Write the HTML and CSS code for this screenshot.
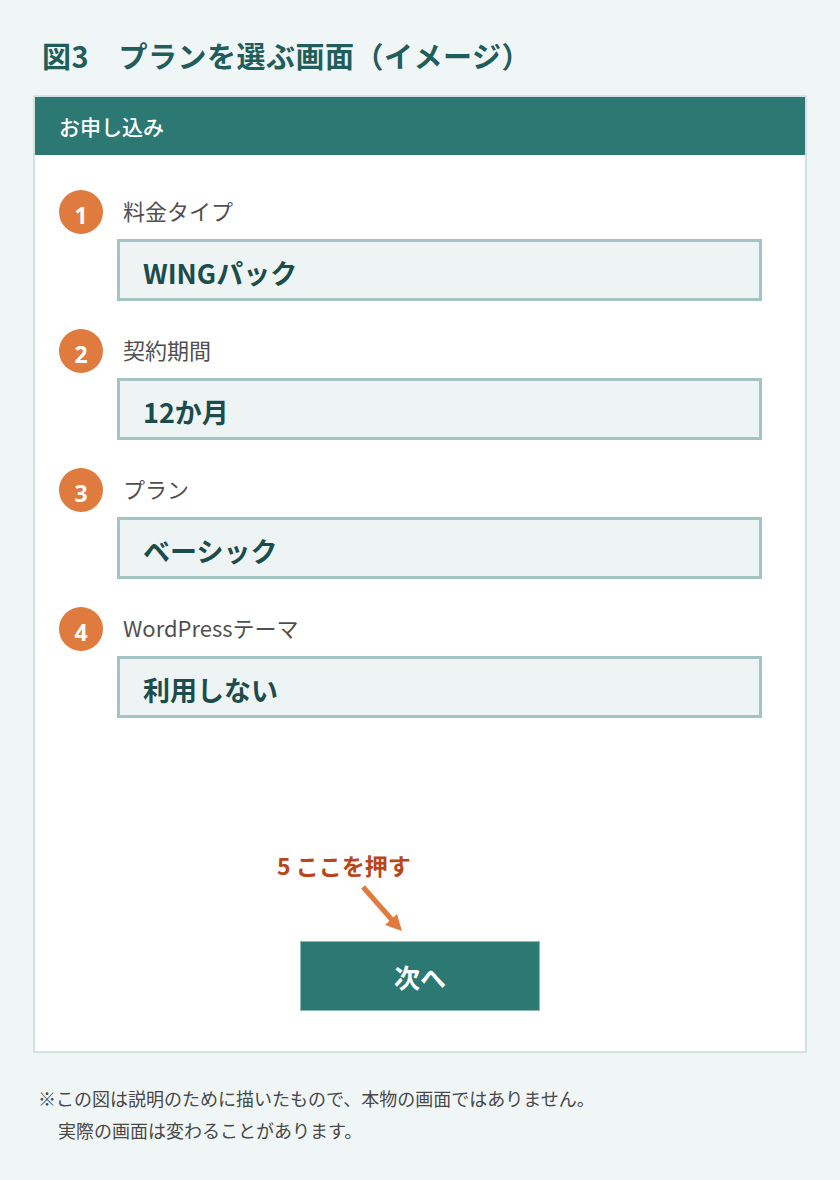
FILE: index.html
```html
<!DOCTYPE html>
<html lang="ja">
<head>
<meta charset="utf-8">
<title>図3 プランを選ぶ画面</title>
<link rel="stylesheet" href="styles.css">
</head>
<body>
<main class="page">
  <h1 class="fig-title">図3　プランを選ぶ画面（イメージ）</h1>

  <section class="card">
    <header class="card-head">お申し込み</header>
    <div class="card-body">
      <div class="fields">
        <div class="field">
          <div class="field-label"><span class="step">1</span><span class="label-text">料金タイプ</span></div>
          <div class="field-box">WINGパック</div>
        </div>
        <div class="field">
          <div class="field-label"><span class="step">2</span><span class="label-text">契約期間</span></div>
          <div class="field-box">12か月</div>
        </div>
        <div class="field">
          <div class="field-label"><span class="step">3</span><span class="label-text">プラン</span></div>
          <div class="field-box">ベーシック</div>
        </div>
        <div class="field">
          <div class="field-label"><span class="step">4</span><span class="label-text">WordPressテーマ</span></div>
          <div class="field-box">利用しない</div>
        </div>
      </div>

      <div class="callout">
        <p class="callout-text">5 ここを押す</p>
        <svg class="callout-arrow" width="48" height="52" viewBox="0 0 48 52">
          <line x1="4" y1="4" x2="34" y2="38" stroke="#e07b3f" stroke-width="5" stroke-linecap="butt"/>
          <polygon points="43,48 26,42 38,31" fill="#e07b3f"/>
        </svg>
      </div>

      <div class="actions">
        <button class="next-btn" type="button">次へ</button>
      </div>
    </div>
  </section>

  <div class="note">
    <p class="note-line">※この図は説明のために描いたもので、本物の画面ではありません。</p>
    <p class="note-line indent">実際の画面は変わることがあります。</p>
  </div>
</main>
</body>
</html>
```

FILE: styles.css
```css
* {
  box-sizing: border-box;
}

html, body {
  margin: 0;
  padding: 0;
}

body {
  background: #f0f6f6;
  font-family: "Noto Sans CJK JP", "Open Sans", sans-serif;
  color: #444;
  width: 840px;
  height: 1180px;
  overflow: hidden;
}

.page {
  padding: 33px 33px 0 33px;
}

.fig-title {
  margin: 0 0 18px 9px;
  font-size: 29px;
  line-height: 44px;
  font-weight: 700;
  color: #1f5e5b;
  letter-spacing: 0.5px;
}

.card {
  width: 774px;
  background: #fff;
  border: 2px solid #d2e2e2;
}

.card-head {
  height: 58px;
  background: #2c7873;
  color: #fff;
  font-size: 21px;
  font-weight: 500;
  line-height: 58px;
  padding-left: 24px;
}

.card-body {
  padding: 35px 43px 40px 24px;
}

.fields {
  display: flex;
  flex-direction: column;
  gap: 28px;
}

.field {
  display: flex;
  flex-direction: column;
  gap: 5px;
}

.field-label {
  display: flex;
  align-items: center;
  height: 44px;
}

.step {
  width: 44px;
  height: 44px;
  border-radius: 50%;
  background: #e07b3f;
  color: #fff;
  font-family: "Open Sans", "Noto Sans", sans-serif;
  font-weight: 700;
  font-size: 23px;
  line-height: 44px;
  text-align: center;
  padding-top: 3px;
}

.label-text {
  margin-left: 20px;
  font-size: 22px;
  color: #505050;
  line-height: 30px;
  margin-top: -4px;
}

.field-box {
  margin-left: 58px;
  height: 62px;
  border: 3px solid #a2c4c3;
  background: #eef4f4;
  padding-left: 23px;
  font-size: 27px;
  font-weight: 700;
  line-height: 62px;
  color: #1c4c4c;
}

.callout {
  margin-top: 132px;
  margin-left: 218px;
  display: flex;
  flex-direction: column;
}

.callout-text {
  margin: 0;
  font-size: 23px;
  font-weight: 700;
  color: #b8461a;
  line-height: 30px;
}

.callout-arrow {
  display: block;
  margin-left: 82px;
  margin-top: 3px;
}

.actions {
  display: flex;
  justify-content: center;
  margin-top: 6px;
  padding-left: 19px;
}

.next-btn {
  width: 240px;
  height: 70px;
  background: #2c7873;
  border: 1px solid #8fb8b5;
  color: #fff;
  font-family: "Noto Sans CJK JP", sans-serif;
  font-size: 26px;
  font-weight: 700;
  cursor: pointer;
}

.note {
  margin-top: 29px;
  padding-left: 5px;
}

.note-line {
  margin: 0;
  font-size: 18px;
  line-height: 32px;
  color: #484848;
  white-space: nowrap;
}

.note-line.indent {
  margin-left: 20px;
}
```
